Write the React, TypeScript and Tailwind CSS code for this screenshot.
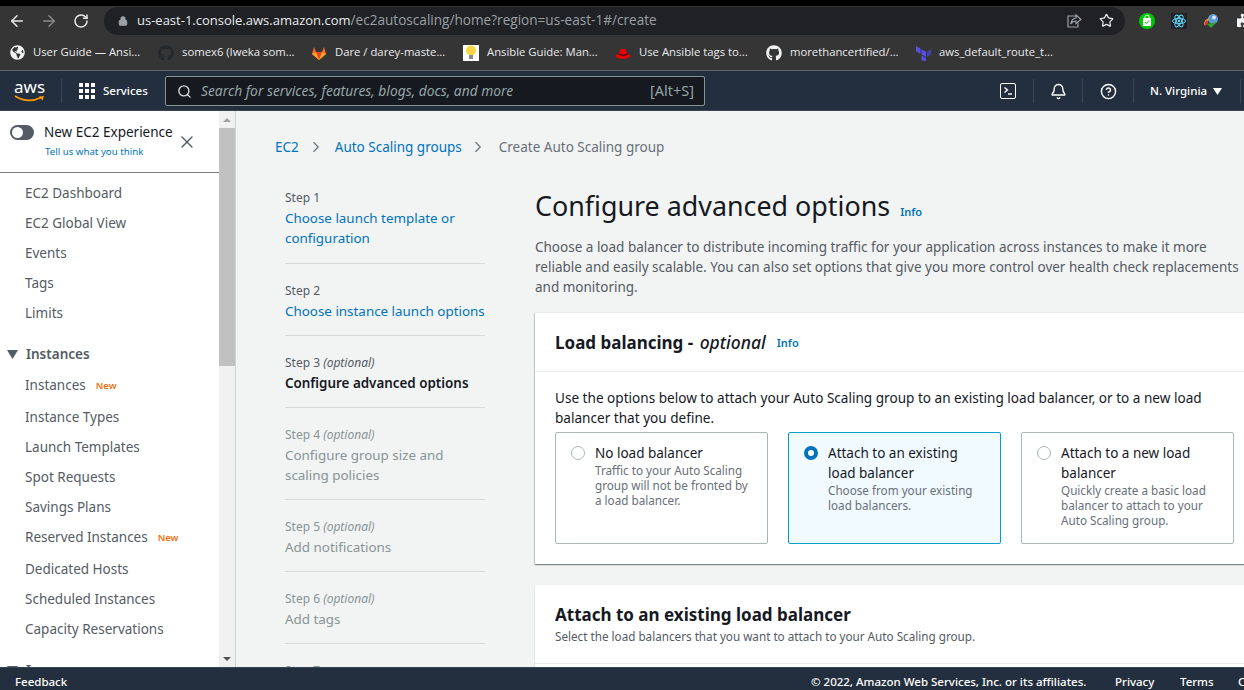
import React from "react";
import { ArrowLeft, ArrowRight, RotateCw, Lock, Star, Search, Bell, CircleHelp, X, ChevronRight } from "lucide-react";
import { FaGithub, FaGlobeAmericas, FaPuzzlePiece } from "react-icons/fa";

function Bookmark({ w, icon, label }: { w: string; icon: React.ReactNode; label: string }) {
  return (
    <div className={`flex shrink-0 items-center gap-[8px] ${w}`}>
      <span className="flex h-4 w-4 shrink-0 items-center justify-center">{icon}</span>
      <span className="whitespace-nowrap text-[11.3px] text-[#e8eaed]">{label}</span>
    </div>
  );
}

function NavItem({ label, badge, h = "h-[30px]" }: { label: string; badge?: string; h?: string }) {
  return (
    <div className={`flex items-center pl-[25px] text-[13.5px] text-[#545b64] ${h}`}>
      {label}
      {badge ? <span className="ml-[10px] mt-[2px] text-[9.5px] font-semibold text-[#ec7211]">{badge}</span> : null}
    </div>
  );
}

function Step({ step, opt, lines, state }: { step: string; opt?: boolean; lines: string[]; state: "link" | "active" | "off" }) {
  const cls =
    state === "link" ? "text-[#0073bb]" : state === "active" ? "font-semibold text-[#16191f]" : "text-[#879596]";
  return (
    <div className="w-[200px] border-b border-[#d5dbdb] pb-[14px] pt-[17px] first:pb-[15px] first:pt-0">
      <div className={`text-[12px] leading-[20px] ${state === "off" ? "text-[#879596]" : "text-[#545b64]"}`}>
        {step} {opt ? <i>(optional)</i> : null}
      </div>
      <div className={`whitespace-nowrap text-[13.4px] leading-[20px] ${cls}`}>
        {lines.map((l) => (
          <div key={l}>{l}</div>
        ))}
      </div>
    </div>
  );
}

function Tile({ title, desc, selected }: { title: string[]; desc: string[]; selected?: boolean }) {
  return (
    <div
      className={`flex h-[112px] gap-[10px] rounded-[2px] border pl-[15px] pt-[10px] ${
        selected ? "border-[#00a1c9] bg-[#f1faff]" : "border-[#aab7b8] bg-white"
      }`}
    >
      {selected ? (
        <span className="mt-[3px] h-[14px] w-[14px] shrink-0 rounded-full border-[4px] border-[#0073bb] bg-white" />
      ) : (
        <span className="mt-[3px] h-[14px] w-[14px] shrink-0 rounded-full border border-[#aab7b8] bg-white" />
      )}
      <div className="min-w-0">
        <div className="text-[13.5px] leading-[20px] text-[#16191f]">
          {title.map((l) => (
            <div key={l}>{l}</div>
          ))}
        </div>
        <div className="text-[11.7px] leading-[15px] text-[#687078]">
          {desc.map((l) => (
            <div key={l}>{l}</div>
          ))}
        </div>
      </div>
    </div>
  );
}

export default function App() {
  return (
    <div className="flex h-[690px] w-[1244px] flex-col overflow-hidden bg-white font-['Noto_Sans','Open_Sans',sans-serif]">
      {/* browser chrome */}
      <div className="h-[6px] shrink-0 bg-black" />
      <div className="flex h-[29px] shrink-0 items-center overflow-hidden bg-[#353535] pl-[8px]">
        <ArrowLeft size={18} strokeWidth={2} className="shrink-0 text-[#e8eaed]" />
        <ArrowRight size={18} strokeWidth={2} className="ml-[14px] shrink-0 text-[#8a8b8c]" />
        <RotateCw size={16} strokeWidth={2.2} className="ml-[15px] shrink-0 text-[#e8eaed]" />
        <div className="ml-[15px] flex h-[28px] w-[1021px] shrink-0 items-center rounded-full bg-[#202124] pl-[14px] pr-[8px] font-['Open_Sans','Noto_Sans',sans-serif]">
          <Lock size={10} strokeWidth={2.5} className="fill-[#9aa0a6] text-[#9aa0a6]" />
          <span className="ml-[9px] text-[13px] text-[#e8eaed]">us-east-1.console.aws.amazon.com</span>
          <span className="text-[13.6px] text-[#9aa0a6]">/ec2autoscaling/home?region=us-east-1#/create</span>
          <div className="ml-auto flex items-center gap-[16px] pr-[3px]">
            <svg width="17" height="16" viewBox="0 0 17 16" fill="none" stroke="#9aa0a6" strokeWidth="1.2">
              <path d="M11 3 H2 V14 H12 V10" />
              <path d="M10 2 L15 6.5 L10 10.5 V8 C7.5 8 6 9 5 11 C5 8 7 5 10 5 Z" />
            </svg>
            <Star size={15} className="text-[#e8eaed]" />
          </div>
        </div>
        <div className="ml-[14px] flex shrink-0 items-center gap-[16px]">
          <span className="flex h-4 w-4 items-center justify-center rounded-full bg-[#00c800]">
            <svg width="10" height="11" viewBox="0 0 10 11"><path d="M1 3h8v8H1z" fill="#fff" /><path d="M3 4V2a2 2 0 0 1 4 0v2" stroke="#fff" fill="none" /><path d="M3 7l1.5 1.5L7 5.5" stroke="#00c800" fill="none" /></svg>
          </span>
          <span className="flex h-4 w-4 items-center justify-center bg-[#20232a]">
            <svg width="16" height="16" viewBox="0 0 16 16" fill="none" stroke="#61dafb" strokeWidth="1">
              <ellipse cx="8" cy="8" rx="6.5" ry="2.6" />
              <ellipse cx="8" cy="8" rx="6.5" ry="2.6" transform="rotate(60 8 8)" />
              <ellipse cx="8" cy="8" rx="6.5" ry="2.6" transform="rotate(120 8 8)" />
              <circle cx="8" cy="8" r="1.2" fill="#61dafb" stroke="none" />
            </svg>
          </span>
          <svg width="16" height="16" viewBox="0 0 16 16">
            <circle cx="10" cy="6" r="5" fill="#5b9bd5" />
            <circle cx="11" cy="4.5" r="2" fill="#d6e6f5" />
            <path d="M1 12 C1 7 4 5 7 5.5 C5 7 4 9 4 11 Z" fill="#e8a020" />
            <path d="M2 13 C1 10 2 8 4 7 L5 11 Z" fill="#d93a2b" />
            <path d="M4 11 L14 9 L8 15 Z" fill="#35a03a" />
          </svg>
          <FaPuzzlePiece size={15} className="ml-[2px] shrink-0 text-[#f1f3f4]" />
        </div>
      </div>
      <div className="flex h-[36px] shrink-0 items-center overflow-hidden border-b border-[#5f6368] bg-[#353535] pl-[9px] font-['Open_Sans','Noto_Sans',sans-serif]">
        <Bookmark w="w-[149px]" label="User Guide — Ansi..." icon={<FaGlobeAmericas size={15} className="text-[#f1f3f4]" />} />
        <Bookmark w="w-[153px]" label="somex6 (Iweka som..." icon={<FaGithub size={16} className="text-[#24292e]" />} />
        <Bookmark
          w="w-[152px]"
          label="Dare / darey-maste..."
          icon={
            <svg width="16" height="16" viewBox="0 0 16 16">
              <path d="M8 15 L1 9 L3 2 L5 7 L11 7 L13 2 L15 9 Z" fill="#fc6d26" />
              <path d="M8 15 L5 7 L11 7 Z" fill="#e24329" />
              <path d="M1 9 L5 7 L8 15 Z" fill="#fca326" />
              <path d="M15 9 L11 7 L8 15 Z" fill="#fca326" />
            </svg>
          }
        />
        <Bookmark
          w="w-[152px]"
          label="Ansible Guide: Man..."
          icon={
            <span className="flex h-4 w-4 items-center justify-center bg-white">
              <svg width="12" height="15" viewBox="0 0 12 15">
                <circle cx="6" cy="5.5" r="5" fill="#f6d743" />
                <rect x="4" y="10" width="4" height="4" fill="#8a8a8a" />
              </svg>
            </span>
          }
        />
        <Bookmark
          w="w-[151px]"
          label="Use Ansible tags to..."
          icon={
            <svg width="16" height="16" viewBox="0 0 16 16">
              <ellipse cx="8" cy="11" rx="7.5" ry="2.8" fill="#e00" />
              <path d="M4 9 Q5 3 8 4 Q11 3 12 9 Z" fill="#e00" />
              <path d="M3.5 8.5 Q8 11 12.5 8.8 L12.8 9.8 Q8 12 3.4 9.6 Z" fill="#111" />
            </svg>
          }
        />
        <Bookmark w="w-[149px]" label="morethancertified/..." icon={<FaGithub size={16} className="text-[#f1f3f4]" />} />
        <Bookmark
          w="w-[150px]"
          label="aws_default_route_t..."
          icon={
            <svg width="16" height="16" viewBox="0 0 16 16" fill="#5c4ee5">
              <path d="M1 1 L5.5 3.6 L5.5 8.8 L1 6.2 Z" />
              <path d="M6.5 4.2 L11 6.8 L11 12 L6.5 9.4 Z" />
              <path d="M12 6.8 L16 4.2 L16 9.4 L12 12 Z" fill="#4040b2" />
              <path d="M6.5 10.6 L11 13.2 L11 16 L6.5 15.6 Z" />
            </svg>
          }
        />
      </div>

      {/* AWS nav */}
      <div className="flex h-[40px] shrink-0 items-center border-b border-[#3b4654] bg-[#232f3e] pt-[1px] text-white">
        <div className="ml-[14px] w-[34px]">
          <div className="h-[17px] text-[17px] leading-[15px] text-white">aws</div>
          <svg width="31" height="8" viewBox="0 0 31 8" className="-mt-[1px]">
            <path d="M1 1 Q14 9 27 2.5" stroke="#ff9900" strokeWidth="1.6" fill="none" />
            <path d="M25 1.5 L30 1 L28.5 5.5 Z" fill="#ff9900" />
          </svg>
        </div>
        <div className="ml-[13px] h-[24px] w-px bg-[#3b4654]" />
        <div className="ml-[17px] grid h-[16px] w-[16px] grid-cols-3 gap-[2.5px]">
          {Array.from({ length: 9 }).map((_, i) => (
            <span key={i} className="bg-white" />
          ))}
        </div>
        <span className="ml-[8px] w-[45px] whitespace-nowrap text-[11.5px] font-medium">Services</span>
        <div className="ml-[17px] flex h-[30px] w-[540px] shrink-0 items-center rounded-[2px] border border-[#879596] bg-[#16191f] pl-[11px] pr-[10px]">
          <Search size={15} strokeWidth={2.2} className="text-[#d5dbdb]" />
          <span className="ml-[9px] text-[13.8px] italic text-[#95a5a6]">Search for services, features, blogs, docs, and more</span>
          <span className="ml-auto text-[14.5px] text-[#95a5a6]">[Alt+S]</span>
        </div>
        <div className="ml-[295px] flex h-[16px] w-[16px] shrink-0 items-center justify-center rounded-[2px] border-[1.5px] border-white">
          <svg width="11" height="10" viewBox="0 0 11 10" fill="none" stroke="#fff" strokeWidth="1.4">
            <path d="M1.5 1.5 L4.5 4 L1.5 6.5" />
            <path d="M5 8 L9 8" />
          </svg>
        </div>
        <div className="ml-[17px] h-[24px] w-px bg-[#3b4654]" />
        <Bell size={17} strokeWidth={2} className="ml-[16px] shrink-0" />
        <div className="ml-[15px] h-[24px] w-px bg-[#3b4654]" />
        <CircleHelp size={17} strokeWidth={2} className="ml-[17px] shrink-0" />
        <div className="ml-[16px] h-[24px] w-px bg-[#3b4654]" />
        <span className="ml-[16px] w-[57px] whitespace-nowrap text-[11.5px] font-medium">N. Virginia</span>
        <svg width="9" height="7" viewBox="0 0 9 7" className="ml-[6px] shrink-0"><path d="M0 0 L9 0 L4.5 7 Z" fill="#fff" /></svg>
        <div className="ml-[18px] h-[24px] w-px bg-[#3b4654]" />
      </div>

      {/* body */}
      <div className="flex min-h-0 flex-1">
        {/* sidebar */}
        <div className="flex w-[236px] shrink-0 border-r border-[#cfd4d4]">
          <div className="w-[219px] shrink-0 overflow-hidden bg-white">
            <div className="relative h-[62px] border-b border-[#7c8080]">
              <div className="flex items-start pl-[10px] pt-[11px]">
                <span className="relative mt-[3px] h-[15px] w-[24px] rounded-full bg-[#545b64]">
                  <span className="absolute left-[2px] top-[2px] h-[11px] w-[11px] rounded-full bg-white" />
                </span>
                <div className="ml-[10px] text-[13.5px] leading-[20px] text-[#16191f]">New EC2 Experience</div>
              </div>
              <div className="mt-[3px] pl-[45px] text-[9.7px] leading-[14px] text-[#0073bb]">Tell us what you think</div>
              <X size={20} strokeWidth={1.6} className="absolute left-[177px] top-[21px] text-[#545b64]" />
            </div>
            <div className="pt-[5px]">
              {["EC2 Dashboard", "EC2 Global View", "Events", "Tags", "Limits"].map((l) => (
                <NavItem key={l} label={l} />
              ))}
              <div className="mt-[11px] flex h-[30px] items-center pl-[7px] text-[13.5px] font-semibold text-[#545b64]">
                <svg width="11" height="9" viewBox="0 0 11 9"><path d="M0 0 L11 0 L5.5 9 Z" fill="#545b64" /></svg>
                <span className="ml-[8px]">Instances</span>
              </div>
              <NavItem label="Instances" badge="New" h="h-[33px]" />
              <NavItem label="Instance Types" h="h-[30px]" />
              <NavItem label="Launch Templates" />
              <NavItem label="Spot Requests" />
              <NavItem label="Savings Plans" />
              <NavItem label="Reserved Instances" badge="New" h="h-[31px]" />
              <NavItem label="Dedicated Hosts" h="h-[32px]" />
              <NavItem label="Scheduled Instances" h="h-[29px]" />
              <NavItem label="Capacity Reservations" />
              <div className="mt-[11px] flex h-[30px] items-center pl-[7px] text-[13.5px] font-semibold text-[#545b64]">
                <svg width="11" height="9" viewBox="0 0 11 9"><path d="M0 0 L11 0 L5.5 9 Z" fill="#545b64" /></svg>
                <span className="ml-[8px]">Images</span>
              </div>
            </div>
          </div>
          {/* scrollbar */}
          <div className="flex w-[16px] shrink-0 flex-col bg-[#f1f1f1]">
            <div className="flex h-[17px] items-center justify-center">
              <svg width="8" height="4" viewBox="0 0 8 4"><path d="M4 0 L8 4 L0 4 Z" fill="#a3a3a3" /></svg>
            </div>
            <div className="h-[238px] bg-[#c1c1c1]" />
            <div className="mt-auto flex h-[17px] items-center justify-center">
              <svg width="8" height="4" viewBox="0 0 8 4"><path d="M0 0 L8 0 L4 4 Z" fill="#505050" /></svg>
            </div>
          </div>
        </div>

        {/* content */}
        <div className="min-w-0 flex-1 overflow-hidden bg-[#f2f3f3] pl-[39px] pt-[25px]">
          <div className="flex h-[22px] items-center text-[13.5px]">
            <span className="text-[#0073bb]">EC2</span>
            <ChevronRight size={18} strokeWidth={1.5} className="ml-[8px] text-[#687078]" />
            <span className="ml-[10px] text-[#0073bb]">Auto Scaling groups</span>
            <ChevronRight size={18} strokeWidth={1.5} className="ml-[7px] text-[#687078]" />
            <span className="ml-[12px] text-[#687078]">Create Auto Scaling group</span>
          </div>
          <div className="mt-[30px] flex gap-[50px] pl-[10px]">
            <div className="w-[200px] shrink-0">
              <Step step="Step 1" lines={["Choose launch template or", "configuration"]} state="link" />
              <Step step="Step 2" lines={["Choose instance launch options"]} state="link" />
              <Step step="Step 3" opt lines={["Configure advanced options"]} state="active" />
              <Step step="Step 4" opt lines={["Configure group size and", "scaling policies"]} state="off" />
              <Step step="Step 5" opt lines={["Add notifications"]} state="off" />
              <Step step="Step 6" opt lines={["Add tags"]} state="off" />
              <Step step="Step 7" lines={["Review"]} state="off" />
            </div>
            <div className="w-[719px] shrink-0">
              <div className="flex items-baseline">
                <h1 className="text-[26.85px] leading-[36px] text-[#16191f]">Configure advanced options</h1>
                <span className="ml-[10px] text-[11px] font-semibold text-[#0073bb]">Info</span>
              </div>
              <p className="mt-[13px] text-[13.5px] leading-[20px] text-[#545b64]">
                Choose a load balancer to distribute incoming traffic for your application across instances to make it more reliable and easily scalable. You can also set options that give you more control over health check replacements and monitoring.
              </p>
              <div className="mt-[15px] h-[252px] border-t border-[#eaeded] bg-white shadow-[0_1px_1px_0_rgba(0,28,36,0.3),1px_1px_1px_0_rgba(0,28,36,0.15),-1px_1px_1px_0_rgba(0,28,36,0.15)]">
                <div className="flex h-[59px] items-center border-b border-[#eaeded] pl-[20px]">
                  <span className="text-[17px] font-bold text-[#16191f]">
                    Load balancing - <i className="ml-[2px] text-[17.5px] font-medium">optional</i>
                  </span>
                  <span className="ml-[11px] mt-[3px] text-[11px] font-semibold text-[#0073bb]">Info</span>
                </div>
                <div className="px-[20px] pt-[16px]">
                  <p className="text-[13.58px] leading-[20px] text-[#16191f]">
                    Use the options below to attach your Auto Scaling group to an existing load balancer, or to a new load balancer that you define.
                  </p>
                  <div className="mt-[4px] grid grid-cols-3 gap-[20px]">
                    <Tile title={["No load balancer"]} desc={["Traffic to your Auto Scaling", "group will not be fronted by", "a load balancer."]} />
                    <Tile selected title={["Attach to an existing", "load balancer"]} desc={["Choose from your existing", "load balancers."]} />
                    <Tile title={["Attach to a new load", "balancer"]} desc={["Quickly create a basic load", "balancer to attach to your", "Auto Scaling group."]} />
                  </div>
                </div>
              </div>
              <div className="mt-[21px] bg-white pb-[40px] shadow-[0_1px_1px_0_rgba(0,28,36,0.3)]">
                <div className="border-b border-[#eaeded] pb-[18px] pl-[20px] pt-[17px]">
                  <div className="text-[17px] font-bold leading-[26px] text-[#16191f]">Attach to an existing load balancer</div>
                  <div className="-mt-[1px] text-[11.7px] leading-[18px] text-[#545b64]">Select the load balancers that you want to attach to your Auto Scaling group.</div>
                </div>
              </div>
            </div>
          </div>
        </div>
      </div>

      {/* footer */}
      <div className="flex h-[23px] shrink-0 items-center overflow-hidden border-t border-[#3b4654] bg-[#232f3e] pl-[15px] pt-[5px] text-[11.5px] font-medium text-white">
        <span className="w-[51px] shrink-0 whitespace-nowrap">Feedback</span>
        <span className="ml-[745px] w-[275px] shrink-0 whitespace-nowrap">© 2022, Amazon Web Services, Inc. or its affiliates.</span>
        <span className="ml-[29px] w-[40px] shrink-0">Privacy</span>
        <span className="ml-[25px] w-[33px] shrink-0">Terms</span>
        <span className="ml-[25px] shrink-0 whitespace-nowrap">Cookie preferences</span>
      </div>
    </div>
  );
}
